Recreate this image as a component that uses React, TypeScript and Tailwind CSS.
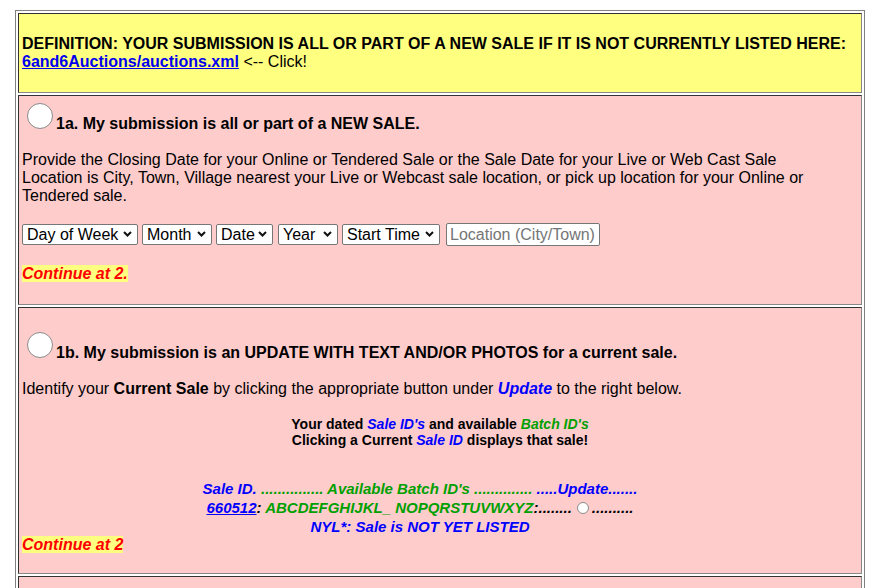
import React from 'react';

const Radio = ({ size = 'lg' }: { size?: 'lg' | 'sm' }) =>
  size === 'lg' ? (
    <span className="inline-block w-[26px] h-[26px] rounded-full bg-white border border-[#8a8a8a] ml-[5px] mr-[3px] mb-[4px] shrink-0" />
  ) : (
    <span className="inline-block w-[12px] h-[12px] rounded-full bg-white border border-[#8a8a8a] ml-[5px] mr-[3px] align-[-1px]" />
  );

const Chevron = () => (
  <svg width="9" height="6" viewBox="0 0 9 6" className="absolute right-[6px] top-[8px] pointer-events-none">
    <path d="M1 1 L4.5 4.5 L8 1" fill="none" stroke="#111" strokeWidth="2" />
  </svg>
);

const Select = ({ label, width }: { label: string; width: string }) => (
  <span className={`relative inline-block ${width}`}>
    <select className="appearance-none w-full h-[21px] bg-white text-black border border-[#767676] rounded-[2px] pl-[4px] pr-[16px] text-[16px] leading-[19px]">
      <option>{label}</option>
    </select>
    <Chevron />
  </span>
);

const Cell = ({ className = '', children }: { className?: string; children?: React.ReactNode }) => (
  <div
    className={`border border-t-[#333] border-l-[#333] border-r-[#888] border-b-[#888] px-[3px] ${className}`}
  >
    {children}
  </div>
);

const Blue = ({ children }: { children: React.ReactNode }) => (
  <span className="text-[#0000ff] italic">{children}</span>
);
const Green = ({ children }: { children: React.ReactNode }) => (
  <span className="text-[#00a000] italic">{children}</span>
);

export default function App() {
  return (
    <div className="min-h-screen bg-white pt-[10px] pl-[15px] font-['Liberation_Sans',Arial,sans-serif] text-[16px] text-black">
      <div className="w-[850px] border border-[#808080] p-[2px] flex flex-col gap-[2px]">
        {/* definition */}
        <Cell className="bg-[#ffff80] pt-[21px] pb-[21px] leading-[18px]">
          <div className="font-bold">
            DEFINITION: YOUR SUBMISSION IS ALL OR PART OF A NEW SALE IF IT IS NOT CURRENTLY LISTED HERE:
          </div>
          <div>
            <a href="#" className="font-bold text-[#0000ee] underline">6and6Auctions/auctions.xml</a> &lt;-- Click!
          </div>
        </Cell>

        {/* 1a */}
        <Cell className="bg-[#ffcccc] pt-[7px] pb-[21px]">
          <div className="flex items-end">
            <Radio />
            <span className="font-bold leading-[18px]">1a. My submission is all or part of a NEW SALE.</span>
          </div>
          <p className="mt-[18px] leading-[18px]">
            Provide the Closing Date for your Online or Tendered Sale or the Sale Date for your Live or Web Cast Sale
            <br />
            Location is City, Town, Village nearest your Live or Webcast sale location, or pick up location for your Online or
            <br />
            Tendered sale.
          </p>
          <div className="mt-[18px] flex items-center h-[23px]">
            <Select label="Day of Week" width="w-[116px]" />
            <span className="ml-[4px]"><Select label="Month" width="w-[70px]" /></span>
            <span className="ml-[4px]"><Select label="Date" width="w-[57px]" /></span>
            <span className="ml-[5px]"><Select label="Year" width="w-[60px]" /></span>
            <span className="ml-[4px]"><Select label="Start Time" width="w-[98px]" /></span>
            <input
              placeholder="Location (City/Town)"
              className="ml-[6px] w-[154px] h-[23px] bg-white border border-[#767676] rounded-[2px] px-[3px] text-[16px] placeholder:text-[#757575]"
            />
          </div>
          <div className="mt-[19px] leading-[18px]">
            <span className="bg-[#ffff80] text-[#ff0000] font-bold italic">Continue at 2.</span>
          </div>
        </Cell>

        {/* 1b */}
        <Cell className="bg-[#ffcccc] pt-[24px] pb-[19px]">
          <div className="flex items-end">
            <Radio />
            <span className="font-bold leading-[18px]">
              1b. My submission is an UPDATE WITH TEXT AND/OR PHOTOS for a current sale.
            </span>
          </div>
          <p className="mt-[18px] leading-[18px]">
            Identify your <b>Current Sale</b> by clicking the appropriate button under{' '}
            <b className="text-[#0000ff] italic">Update</b> to the right below.
          </p>
          <div className="mt-[18px] text-center text-[14px] leading-[16px] font-bold">
            <div>
              Your dated <Blue>Sale ID's</Blue> and available <Green>Batch ID's</Green>
            </div>
            <div>
              Clicking a Current <Blue>Sale ID</Blue> displays that sale!
            </div>
          </div>
          <div className="mt-[31px] pr-[40px] text-center text-[15px] font-bold italic leading-[19px]">
            <div>
              <span className="text-[#0000ff]">Sale ID.</span>
              <span className="text-[#00a000]"> ............... Available Batch ID's ..............</span>
              <span className="text-[#0000ff]"> .....Update.......</span>
            </div>
            <div>
              <a href="#" className="text-[#0000ff] underline"> 660512</a>
              <span>: </span>
              <span className="text-[#00a000]">ABCDEFGHIJKL_ NOPQRSTUVWXYZ</span>
              <span>:........</span>
              <Radio size="sm" />
              <span>..........</span>
            </div>
            <div className="text-[#0000ff]">NYL*: Sale is NOT YET LISTED</div>
          </div>
          <div className="leading-[18px]">
            <span className="bg-[#ffff80] text-[#ff0000] font-bold italic">Continue at 2</span>
          </div>
        </Cell>

        <Cell className="bg-[#ffcccc] h-[60px]" />
      </div>
    </div>
  );
}
